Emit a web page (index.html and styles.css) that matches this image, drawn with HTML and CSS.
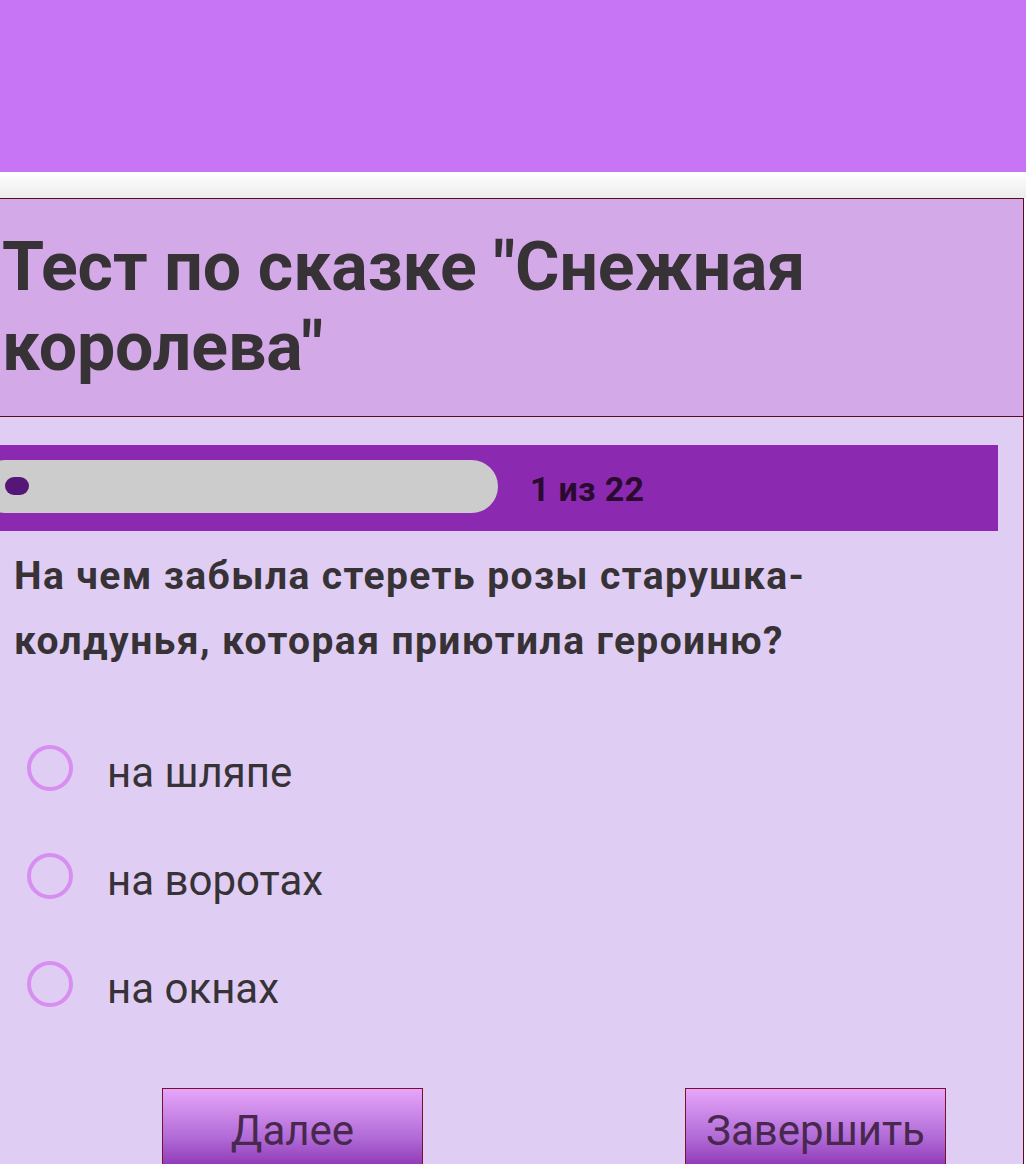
FILE: index.html
```html
<!DOCTYPE html>
<html lang="ru">
<head>
<meta charset="utf-8">
<title>Тест по сказке "Снежная королева"</title>
<link rel="stylesheet" href="styles.css">
</head>
<body>
<div class="topbar"></div>
<div class="shade"></div>
<div class="card">
  <div class="card-head">
    <h1 class="title">Тест по сказке "Снежная королева"</h1>
  </div>
  <div class="card-body">
    <div class="progress">
      <div class="track"><span class="dot"></span></div>
      <div class="count">1 из 22</div>
    </div>
    <p class="question">На чем забыла стереть розы старушка-колдунья, которая приютила героиню?</p>
    <ul class="options">
      <li class="option"><span class="radio"></span><span class="opt-text">на шляпе</span></li>
      <li class="option"><span class="radio"></span><span class="opt-text">на воротах</span></li>
      <li class="option"><span class="radio"></span><span class="opt-text">на окнах</span></li>
    </ul>
    <div class="buttons">
      <button class="btn">Далее</button>
      <button class="btn">Завершить</button>
    </div>
  </div>
</div>
</body>
</html>
```

FILE: styles.css
```css
html, body {
  margin: 0;
  padding: 0;
}
body {
  font-family: Roboto, "Liberation Sans", sans-serif;
  background: #ffffff;
  color: #363236;
  overflow: hidden;
}
.topbar {
  height: 172px;
  background: #c875f5;
}
.shade {
  height: 26px;
  background: linear-gradient(#ffffff, #ececec);
}
.card {
  width: 1024px;
  border: 1.5px solid #5c0a22;
  border-left: none;
  box-sizing: border-box;
}
.card-head {
  background: #d3a9e8;
  border-bottom: 1.5px solid #5c0a22;
  height: 218px;
  box-sizing: border-box;
  padding: 28px 0 0 2px;
}
.title {
  margin: 0;
  font-size: 68px;
  line-height: 80px;
  font-weight: 700;
  color: #363236;
  letter-spacing: -0.1px;
}
.card-body {
  background: #dfcdf3;
  padding-top: 28px;
  height: 760px;
}
.progress {
  width: 998px;
  height: 86px;
  background: #8b2ab0;
  display: flex;
  align-items: center;
  gap: 32px;
}
.track {
  width: 520px;
  height: 53px;
  margin: 0 0 4px -22px;
  border-radius: 27px;
  background: #cccccc;
  display: flex;
  align-items: center;
  padding-left: 27px;
  box-sizing: border-box;
}
.dot {
  width: 24px;
  height: 18px;
  border-radius: 9px;
  background: #561677;
}
.count {
  font-size: 34px;
  font-weight: 700;
  letter-spacing: 0.3px;
  color: #2a0a2e;
  padding-top: 2px;
}
.question {
  margin: 13px 0 0 14px;
  font-size: 39px;
  line-height: 65px;
  font-weight: 700;
  letter-spacing: 1.4px;
  color: #363236;
  width: 880px;
}
.options {
  list-style: none;
  margin: 71px 0 0 0;
  padding: 0 0 0 27px;
  display: flex;
  flex-direction: column;
  gap: 62px;
}
.option {
  display: flex;
  align-items: center;
  height: 46px;
}
.radio {
  width: 46px;
  height: 46px;
  border: 4px solid #d88ef0;
  border-radius: 50%;
  box-sizing: border-box;
  flex: none;
}
.opt-text {
  margin-left: 34px;
  font-size: 42px;
  color: #363236;
  padding-top: 8px;
}
.buttons {
  display: flex;
  gap: 262px;
  margin: 81px 0 0 162px;
}
.btn {
  width: 261px;
  height: 84px;
  border: 1.5px solid #7a0f2e;
  background: linear-gradient(#e6a6fa, #b06ad6 60%, #8a30b0);
  font-family: Roboto, "Liberation Sans", sans-serif;
  font-size: 42px;
  color: #48284e;
  padding: 0;
}
```
